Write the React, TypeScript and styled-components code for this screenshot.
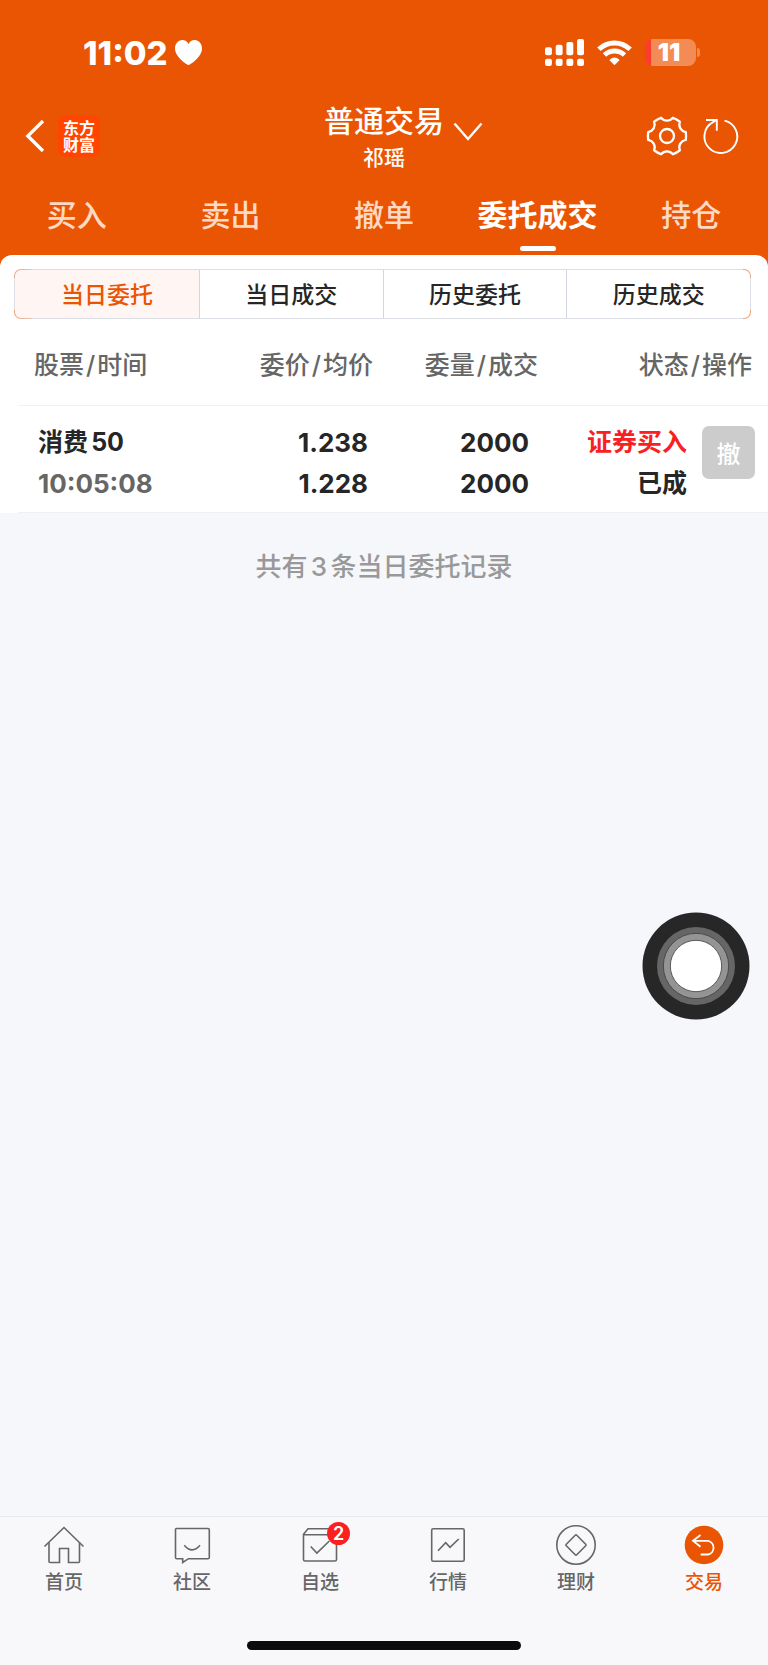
import React, { useState } from 'react';
import styled, { createGlobalStyle } from 'styled-components';

const orange = '#ea5504';
const red = '#fa2022';

const GlobalStyle = createGlobalStyle`
  * { box-sizing: border-box; }
  body {
    margin: 0;
    background: #f6f7fa;
    font-family: Inter, "Noto Sans CJK SC", sans-serif;
    font-weight: 500;
    color: #262626;
    text-autospace: normal;
  }
  button {
    font: inherit;
    color: inherit;
    background: none;
    border: 0;
    padding: 0;
    cursor: pointer;
    text-autospace: inherit;
  }
  svg { display: block; }
`;

const Screen = styled.div`
  min-height: 100vh;
  display: flex;
  flex-direction: column;
`;

const Header = styled.header`
  background: ${orange};
  color: #fff;
`;

const StatusBar = styled.div`
  display: flex;
  justify-content: space-between;
  align-items: center;
  height: 100px;
  padding: 5px 68px 0 83px;
`;

const StatusGroup = styled.div<{ $gap: number }>`
  display: flex;
  align-items: center;
  gap: ${(p) => p.$gap}px;
`;

const Clock = styled.time`
  font-size: 33px;
  line-height: 40px;
  font-weight: 800;
`;

const Battery = styled.div`
  display: flex;
  align-items: center;
  gap: 1px;
  &::after {
    content: '';
    width: 3px;
    height: 9px;
    border-radius: 0 4px 4px 0;
    background: #f28b54;
  }
`;

const BatteryBody = styled.div`
  width: 51px;
  height: 27px;
  padding-right: 3px;
  border-radius: 8px;
  background: linear-gradient(to right, #ff3b30 6px, #f28b54 6px);
  font-size: 25px;
  line-height: 27px;
  font-weight: 900;
  text-align: center;
`;

const AppBar = styled.div`
  display: grid;
  grid-template-columns: 1fr auto 1fr;
  align-items: start;
  padding: 1px 24px 0;
  height: 76px;
`;

const BarSide = styled.div<{ $end?: boolean }>`
  display: flex;
  align-items: center;
  justify-content: ${(p) => (p.$end ? 'flex-end' : 'flex-start')};
  gap: ${(p) => (p.$end ? 15 : 12)}px;
  padding-right: ${(p) => (p.$end ? 5 : 0)}px;
  height: 69px;
`;

const Logo = styled.a`
  width: 42px;
  height: 42px;
  padding: 4px 5px;
  border-radius: 8px;
  background: #ff4500;
  color: #fff;
  font-family: "Noto Sans CJK SC", sans-serif;
  font-size: 16px;
  line-height: 17px;
  font-weight: 700;
  text-decoration: none;
`;

const TitleButton = styled.button`
  position: relative;
  text-align: center;
`;

const Title = styled.h1`
  margin: 0;
  font-size: 30px;
  line-height: 40px;
  font-weight: 500;
`;

const Account = styled.div`
  font-size: 21px;
  line-height: 34px;
`;

const TitleArrow = styled.svg`
  position: absolute;
  left: 100%;
  top: 19px;
  margin-left: 6px;
`;

const Tabs = styled.nav`
  display: grid;
  grid-template-columns: repeat(5, 1fr);
  padding: 9px 0 4px;
`;

const Tab = styled.button<{ $active: boolean }>`
  display: flex;
  flex-direction: column;
  align-items: center;
  gap: 1px;
  font-size: 30px;
  line-height: 60px;
  font-weight: ${(p) => (p.$active ? 700 : 500)};
  color: ${(p) => (p.$active ? '#fff' : '#fdd9c6')};
  &::after {
    content: '';
    width: 36px;
    height: 5px;
    border-radius: 3px;
    background: ${(p) => (p.$active ? '#fff' : 'transparent')};
  }
`;

const PanelBack = styled.div`
  background: ${orange};
`;

const Panel = styled.section`
  background: #fff;
  border-radius: 12px 12px 0 0;
  padding-top: 14px;
`;

const Segments = styled.div`
  display: grid;
  grid-template-columns: repeat(4, 1fr);
  margin: 0 17px 0 14px;
  padding: 1px;
  border-radius: 7px;
  overflow: hidden;
  background:
    linear-gradient(#dcdfe5, #dcdfe5) 0 50% / 8px calc(100% - 18px) no-repeat,
    linear-gradient(#dcdfe5, #dcdfe5) 100% 50% / 8px calc(100% - 18px) no-repeat,
    linear-gradient(to right, #efa37c, #e6c9bd 18px, #dcdfe5 18px calc(100% - 8px), #efa37c calc(100% - 8px));
`;

const Segment = styled.button<{ $active: boolean }>`
  height: 48px;
  font-size: 23px;
  line-height: 50px;
  color: ${(p) => (p.$active ? orange : '#262626')};
  background: ${(p) => (p.$active ? '#fff5f2' : '#fff')};
  & + & {
    border-left: 1px solid #d3d6de;
  }
  &:first-child { border-radius: 6px 0 0 6px; }
  &:last-child { border-radius: 0 6px 6px 0; }
`;

const TableWrap = styled.div`
  padding-left: 18px;
`;

const Table = styled.table`
  width: 100%;
  table-layout: fixed;
  border-collapse: collapse;
  text-align: right;
`;

const Col = styled.col<{ $w: number }>`
  width: ${(p) => p.$w}%;
`;

const Th = styled.th<{ $left?: boolean; $right?: number }>`
  height: 86px;
  padding: 6px ${(p) => p.$right ?? 5}px 0 16px;
  border-bottom: 1px solid #f1f2f4;
  vertical-align: top;
  font-size: 25px;
  line-height: 80px;
  font-weight: 500;
  color: #666;
  white-space: nowrap;
  text-align: ${(p) => (p.$left ? 'left' : 'right')};
`;

const Slash = styled.span`
  margin: 0 2px;
`;

const Td = styled.td<{ $left?: boolean; $right?: number }>`
  padding: 16px ${(p) => p.$right ?? 0}px 8px ${(p) => (p.$left ? 20 : 0)}px;
  border-bottom: 1px solid #eff0f3;
  vertical-align: top;
  text-align: ${(p) => (p.$left ? 'left' : 'right')};
  white-space: nowrap;
`;

const Line = styled.div<{ $color?: string; $number?: boolean }>`
  font-size: ${(p) => (p.$number ? 26 : 25)}px;
  line-height: 41px;
  font-weight: 700;
  color: ${(p) => p.$color ?? '#262626'};
`;

const CancelButton = styled.button`
  width: 53px;
  height: 53px;
  margin-top: 4px;
  border-radius: 7px;
  background: #ccc;
  color: #fff;
  font-size: 24px;
`;

const Summary = styled.p`
  flex: 1;
  margin: 0;
  padding-top: 34px;
  font-size: 26px;
  line-height: 40px;
  color: #999;
  text-align: center;
`;

const BottomBar = styled.footer`
  border-top: 1px solid #e8e9ec;
  background: #f8f8fb;
  padding: 6px 0 15px;
`;

const BottomNav = styled.nav`
  display: grid;
  grid-template-columns: repeat(6, 1fr);
`;

const NavItem = styled.a<{ $active?: boolean }>`
  display: flex;
  flex-direction: column;
  align-items: center;
  font-size: 19px;
  line-height: 32px;
  color: ${(p) => (p.$active ? orange : '#666')};
  text-decoration: none;
`;

const IconBox = styled.span`
  position: relative;
`;

const Badge = styled.span`
  position: absolute;
  top: -1px;
  right: -8px;
  width: 23px;
  height: 23px;
  border-radius: 50%;
  background: ${red};
  color: #fff;
  font-size: 18px;
  line-height: 24px;
  font-weight: 600;
  text-align: center;
`;

const HomeIndicator = styled.div`
  width: 274px;
  height: 9px;
  margin: 42px auto 0;
  border-radius: 5px;
  background: #0b0b0b;
`;

const AssistiveTouch = styled.button`
  position: fixed;
  right: 18px;
  top: 912px;
`;

const lobePath = (() => {
  const at = (r: number, deg: number) => {
    const a = (deg * Math.PI) / 180;
    return `${(21 + r * Math.cos(a)).toFixed(2)} ${(21 + r * Math.sin(a)).toFixed(2)}`;
  };
  let d = `M${at(19.2, -12)}`;
  for (let k = 0; k < 360; k += 60) {
    d += `Q${at(19.4, k)} ${at(19.2, k + 12)}`;
    d += `C${at(14.6, k + 20)} ${at(14.6, k + 40)} ${at(19.2, k + 48)}`;
  }
  return d + 'Z';
})();

const GearIcon = () => (
  <svg width="42" height="42" viewBox="0 0 42 42" fill="none" stroke="#fff" strokeWidth="2.3" strokeLinejoin="round">
    <path d={lobePath} />
    <circle cx="21" cy="21" r="7" />
  </svg>
);

const RefreshIcon = () => (
  <svg width="36" height="38" viewBox="0 0 36 38" fill="none" stroke="#fff" strokeWidth="1.9">
    <path d="M21.5 3.6A16.4 16.4 0 1 1 10 5.2L13.6 3" />
    <path d="M3 3H13.8V13.7" />
  </svg>
);

const BackIcon = () => (
  <svg width="22" height="34" viewBox="0 0 22 34" fill="none" stroke="#fff" strokeWidth="3.3">
    <path d="M19 2L3.8 17L19 32" />
  </svg>
);

const HeartIcon = () => (
  <svg width="27" height="25" viewBox="0 0 27 25" fill="#fff">
    <path d="M13.5 25C12.500 25 0 17.200 0 8.400C0 3.600 3.200 0 7.300 0C10.100 0 12.300 1.500 13.500 4C14.700 1.500 16.900 0 19.700 0C23.800 0 27 3.600 27 8.400C27 17.200 14.500 25 13.500 25Z" />
  </svg>
);

const SignalIcon = () => (
  <svg width="39" height="27" viewBox="0 0 39 27" fill="#fff">
    {[8.3, 5.7, 3, 0].map((y, i) => (
      <g key={y}>
        <rect x={i * 10.7} y={y} width="6.900" height={16.3 - y} rx="2" />
        <rect x={i * 10.7} y="19.700" width="6.900" height="7.300" rx="2" />
      </g>
    ))}
  </svg>
);

const WifiIcon = () => (
  <svg width="35" height="26" viewBox="0 0 35 26" fill="none" stroke="#fff" strokeWidth="5">
    <path d="M1.900 9.300A22.500 22.500 0 0 1 33.100 9.300" />
    <path d="M7.500 15A14.500 14.500 0 0 1 27.500 15" />
    <path d="M12.800 20Q17.500 16 22.200 20L17.500 24.800Z" fill="#fff" strokeWidth="1" strokeLinejoin="round" />
  </svg>
);

const navStroke = { fill: 'none', stroke: '#666', strokeWidth: 1.6 };

const icons: Record<string, React.ReactNode> = {
  home: (
    <g {...navStroke}>
      <path d="M2.500 23.500L22 4.500L41.500 23.500" />
      <path d="M7 19.500V38.500Q7 39.500 8 39.500H17.500V25.500H26.500V39.500H36.500Q37.500 39.500 37.500 38.500V19.500" />
    </g>
  ),
  community: (
    <g {...navStroke}>
      <path d="M6.500 5.500H38Q39.300 5.500 39.300 6.800V34.400Q39.300 35.700 38 35.700H18.500L12.700 39.500V35.700H6.800Q5.500 35.700 5.500 34.400V6.500Q5.500 5.500 6.500 5.500Z" />
      <path d="M14.300 22.200Q22 31.500 30 22.200" />
    </g>
  ),
  watchlist: (
    <g {...navStroke}>
      <path d="M38.500 11.700V36.500Q38.500 38 37 38H7Q5.500 38 5.500 36.500V11.200L10 5.700H34L38.500 11.700ZM5.500 11.700H38.500" />
      <path d="M12.700 23.500L18.900 30L31.300 18" />
    </g>
  ),
  market: (
    <g {...navStroke}>
      <rect x="5.700" y="5.700" width="32.500" height="32.500" rx="1.500" />
      <path d="M12 27.700L19.700 19.700L24 24.300L32.700 16" />
    </g>
  ),
  wealth: (
    <g {...navStroke}>
      <circle cx="22" cy="22" r="19.200" />
      <path d="M21.200 12.300Q22 11.500 22.800 12.300L31.700 21.200Q32.500 22 31.700 22.800L22.800 31.700Q22 32.500 21.200 31.700L12.300 22.800Q11.500 22 12.300 21.200Z" />
    </g>
  ),
  trade: (
    <g fill="none" stroke="#fff" strokeWidth="1.800">
      <circle cx="22" cy="22" r="19.300" fill={orange} stroke="none" />
      <path d="M18.500 12L11 17.800L18.500 23.800M11 17.800H26A7 7 0 0 1 26 31.500H18.700" />
    </g>
  ),
};

const tabs = ['买入', '卖出', '撤单', '委托成交', '持仓'];
const segments = ['当日委托', '当日成交', '历史委托', '历史成交'];
const columns = [
  { top: '股票', bottom: '时间', left: true },
  { top: '委价', bottom: '均价' },
  { top: '委量', bottom: '成交' },
  { top: '状态', bottom: '操作', span: 2, right: 16 },
];
const navItems = [
  { icon: 'home', label: '首页' },
  { icon: 'community', label: '社区' },
  { icon: 'watchlist', label: '自选', badge: 2 },
  { icon: 'market', label: '行情' },
  { icon: 'wealth', label: '理财' },
  { icon: 'trade', label: '交易' },
];

export default function App() {
  const [tab, setTab] = useState('委托成交');
  const [segment, setSegment] = useState('当日委托');

  return (
    <Screen>
      <GlobalStyle />
      <Header>
        <StatusBar>
          <StatusGroup $gap={7}>
            <Clock>11:02</Clock>
            <HeartIcon />
          </StatusGroup>
          <StatusGroup $gap={13}>
            <SignalIcon />
            <WifiIcon />
            <Battery>
              <BatteryBody>11</BatteryBody>
            </Battery>
          </StatusGroup>
        </StatusBar>
        <AppBar>
          <BarSide>
            <button aria-label="返回"><BackIcon /></button>
            <Logo href="#">东方财富</Logo>
          </BarSide>
          <TitleButton>
            <Title>普通交易</Title>
            <Account>祁瑶</Account>
            <TitleArrow width="36" height="22" viewBox="0 0 36 22" fill="none" stroke="#fff" strokeWidth="2.400">
              <path d="M4.500 3.500L18 19L31.500 3.500" />
            </TitleArrow>
          </TitleButton>
          <BarSide $end>
            <button aria-label="设置"><GearIcon /></button>
            <button aria-label="刷新"><RefreshIcon /></button>
          </BarSide>
        </AppBar>
        <Tabs>
          {tabs.map((t) => (
            <Tab key={t} $active={t === tab} onClick={() => setTab(t)}>{t}</Tab>
          ))}
        </Tabs>
      </Header>

      <PanelBack>
        <Panel>
          <Segments>
            {segments.map((s) => (
              <Segment key={s} $active={s === segment} onClick={() => setSegment(s)}>{s}</Segment>
            ))}
          </Segments>
          <TableWrap>
            <Table>
              <colgroup>
                {[24, 24, 22, 20, 10].map((w, i) => <Col key={i} $w={w} />)}
              </colgroup>
              <thead>
                <tr>
                  {columns.map((c) => (
                    <Th key={c.top} $left={c.left} $right={c.right} colSpan={c.span}>
                      {c.top}<Slash>/</Slash>{c.bottom}
                    </Th>
                  ))}
                </tr>
              </thead>
              <tbody>
                <tr>
                  <Td $left>
                    <Line>消费50</Line>
                    <Line $number $color="#666">10:05:08</Line>
                  </Td>
                  <Td $right={10}>
                    <Line $number>1.238</Line>
                    <Line $number>1.228</Line>
                  </Td>
                  <Td $right={14}>
                    <Line $number>2000</Line>
                    <Line $number>2000</Line>
                  </Td>
                  <Td $right={6}>
                    <Line $color={red}>证券买入</Line>
                    <Line>已成</Line>
                  </Td>
                  <Td $right={13}>
                    <CancelButton>撤</CancelButton>
                  </Td>
                </tr>
              </tbody>
            </Table>
          </TableWrap>
        </Panel>
      </PanelBack>

      <Summary>共有3条当日委托记录</Summary>

      <BottomBar>
        <BottomNav>
          {navItems.map((n) => (
            <NavItem key={n.icon} href="#" $active={n.icon === 'trade'}>
              <IconBox>
                <svg width="44" height="44" viewBox="0 0 44 44">{icons[n.icon]}</svg>
                {n.badge && <Badge>{n.badge}</Badge>}
              </IconBox>
              {n.label}
            </NavItem>
          ))}
        </BottomNav>
        <HomeIndicator />
      </BottomBar>

      <AssistiveTouch aria-label="辅助触控">
        <svg width="108" height="108" viewBox="0 0 108 108">
          <circle cx="54" cy="54" r="53.500" fill="#272727" />
          <circle cx="54" cy="54" r="39" fill="#666" />
          <circle cx="54" cy="54" r="32.700" fill="#949494" stroke="#4a4a4a" />
          <circle cx="54" cy="54" r="25.700" fill="#fff" stroke="#5a5a5a" />
        </svg>
      </AssistiveTouch>
    </Screen>
  );
}
